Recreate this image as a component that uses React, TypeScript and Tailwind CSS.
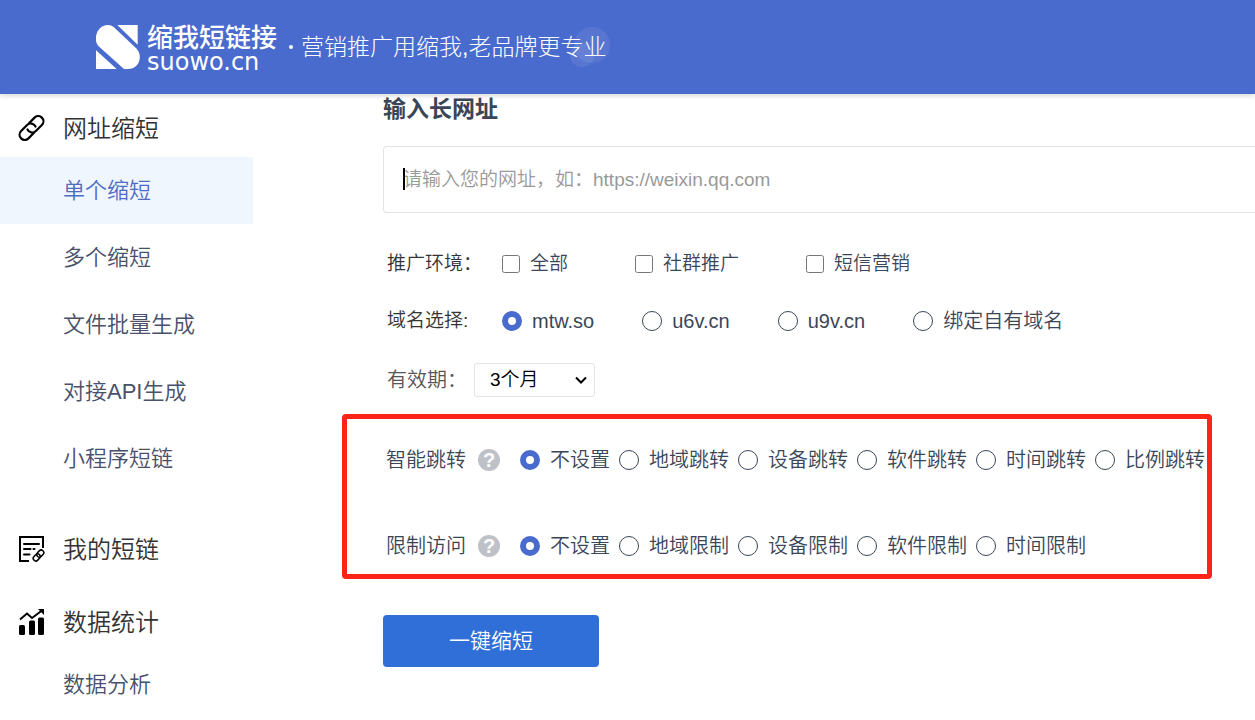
import React, { useState } from 'react';

interface NavGroup {
  title: string;
  icon: React.ReactNode;
  items: string[];
}

const LinkIcon = () => (
  <svg viewBox="0 0 28 28" className="size-7" fill="none" stroke="#000" strokeWidth="2.2" strokeLinecap="round">
    <g transform="translate(14.5 13) rotate(-45)">
      <path d="M2 -5.2H9.5A5.2 5.2 0 0 1 9.5 5.2H1A5.2 5.2 0 0 1 -3.9 -1.8" />
      <path d="M-2 5.2H-9.5A5.2 5.2 0 0 1 -9.5 -5.2H-1A5.2 5.2 0 0 1 3.9 1.8" />
    </g>
  </svg>
);

const NoteIcon = () => (
  <svg viewBox="0 1 28 28" className="size-7" fill="none" stroke="#000" strokeWidth="2" strokeLinecap="round">
    <path d="M12 26H3V2H26V13" strokeLinecap="butt" />
    <path d="M7 9H22M7 14H13.5M16.5 14H17.5M7 19.5H12.5" />
    <g transform="translate(21.5 20.5) rotate(-47)" strokeWidth="1.5">
      <rect x="-6.5" y="-2.6" width="7.8" height="5.2" rx="2.6" />
      <rect x="-1.3" y="-2.6" width="7.8" height="5.2" rx="2.6" />
    </g>
  </svg>
);

const ChartIcon = () => (
  <svg viewBox="0 0 28 28" className="size-7">
    <rect x="2" y="16" width="6" height="10" rx="1.5" />
    <rect x="12" y="11.5" width="6" height="14.5" rx="1.5" />
    <rect x="21" y="8.5" width="6" height="17.5" rx="1.5" />
    <path d="M3 10.5L10 4.5L15 9L25 1.5" fill="none" stroke="#000" strokeWidth="2" />
    <path d="M21 0H27V6Z" />
  </svg>
);

const Logo = () => (
  <svg viewBox="0 0 132 132" className="size-[44px]" fill="#fff">
    <path d="M64 0H125V59Z" />
    <path d="M0 76V132H62Z" />
    <path d="M53 6L122 71C141 92 131 132 96 132H84L7 63C-10 42 3 0 36 0Q46 0 53 6Z" />
  </svg>
);

const NAV: NavGroup[] = [
  {
    title: '网址缩短',
    icon: <LinkIcon />,
    items: ['单个缩短', '多个缩短', '文件批量生成', '对接API生成', '小程序短链'],
  },
  { title: '我的短链', icon: <NoteIcon />, items: [] },
  { title: '数据统计', icon: <ChartIcon />, items: ['数据分析'] },
];

const ENVIRONMENTS = ['全部', '社群推广', '短信营销'];
const DOMAINS = ['mtw.so', 'u6v.cn', 'u9v.cn', '绑定自有域名'];
const JUMPS = ['不设置', '地域跳转', '设备跳转', '软件跳转', '时间跳转', '比例跳转'];
const LIMITS = ['不设置', '地域限制', '设备限制', '软件限制', '时间限制'];

const Header = () => (
  <header className="relative z-10 flex h-[94px] items-center bg-[#4a6bce] pl-24 text-white shadow-[0_1px_6px_rgba(0,0,0,0.2)]">
    <a href="#" className="flex items-center gap-[7px]">
      <Logo />
      <span className="flex flex-col pt-1">
        <span className="text-[26px] leading-[26px] font-medium whitespace-nowrap">缩我短链接</span>
        <span className="font-['DejaVu_Sans'] text-[24px] leading-[22px] font-normal">suowo.cn</span>
      </span>
    </a>
    <span className="ml-3 size-1 shrink-0 rounded-full bg-white" />
    <p className="relative ml-2 text-[23px] leading-8 font-light whitespace-nowrap">
      <span className="absolute -top-1 -right-1 size-9 rounded-full bg-white/8" />
      <span className="absolute top-3 right-3 size-6 rounded-full bg-white/8" />
      营销推广用缩我,老品牌更专业
    </p>
  </header>
);

const Sidebar = () => {
  const [active, setActive] = useState('单个缩短');

  return (
    <nav className="flex w-[253px] shrink-0 flex-col gap-4 pt-[6px]">
      {NAV.map(group => (
        <div key={group.title} className="first:pb-[13px]">
          <h2 className="flex h-[57px] items-center gap-[18px] pl-[17px] text-[24px] text-[#333]">
            {group.icon}
            {group.title}
          </h2>
          {group.items.map(item => (
            <a
              key={item}
              href="#"
              onClick={() => setActive(item)}
              className={`flex h-[67px] items-center pl-[63px] text-[22px] ${
                item === active ? 'bg-[#eff6fd] text-[#4f6cc4]' : 'text-[#48506a]'
              }`}
            >
              {item}
            </a>
          ))}
        </div>
      ))}
    </nav>
  );
};

interface RadioGroupProps {
  name: string;
  options: string[];
  className: string;
}

const RadioGroup = ({ name, options, className }: RadioGroupProps) => {
  const [value, setValue] = useState(options[0]);

  return (
    <div role="radiogroup" className={`flex items-center ${className}`}>
      {options.map(option => (
        <label key={option} className="flex items-center gap-[10px] text-[20px] whitespace-nowrap">
          <input
            type="radio"
            name={name}
            value={option}
            checked={value === option}
            onChange={() => setValue(option)}
            className="size-5 shrink-0 appearance-none rounded-full border border-[#3a4657] bg-white checked:border-[6px] checked:border-[#4a6bce]"
          />
          {option}
        </label>
      ))}
    </div>
  );
};

const SettingRow = ({ title, name, options }: { title: string; name: string; options: string[] }) => (
  <div className="flex h-[30px] items-center text-[20px] whitespace-nowrap">
    <span>{title}</span>
    <button
      type="button"
      aria-label={`${title}说明`}
      className="mr-5 ml-3 flex size-[22px] shrink-0 items-center justify-center rounded-full bg-[#bfc1c8] font-['Liberation_Sans'] text-[20px] leading-none font-bold text-white"
    >
      ?
    </button>
    <RadioGroup name={name} options={options} className="gap-[9px]" />
  </div>
);

const App: React.FC = () => {
  const [url, setUrl] = useState('');

  return (
    <div className="min-h-screen overflow-x-hidden bg-white font-['Liberation_Sans','Noto_Sans_CJK_SC',sans-serif] font-[350]">
      <Header />
      <div className="flex">
        <Sidebar />
        <main className="min-w-0 flex-1 pl-[89px] text-[#3a4657]">
          <form onSubmit={e => e.preventDefault()}>
            <div className="pl-[41px]">
              <h1 className="text-[23px] leading-[30px] font-bold">
                <label htmlFor="long-url">输入长网址</label>
              </h1>
              <div className="relative mt-[22px]">
                <input
                  id="long-url"
                  type="text"
                  value={url}
                  onChange={e => setUrl(e.target.value)}
                  placeholder="请输入您的网址，如：https://weixin.qq.com"
                  className="h-[67px] w-full rounded-l-[4px] border border-r-0 border-[#e3e3e6] pl-[19px] text-[19px] outline-none placeholder:text-[#999]"
                />
                <span className="absolute top-[22px] left-5 h-[22px] w-[2px] bg-black" />
              </div>

              <div className="mt-9 flex h-[30px] items-center pl-1 text-[19px] whitespace-nowrap">
                <span className="w-[115px] shrink-0 text-[#333]">推广环境：</span>
                <div className="flex items-center gap-[67px]">
                  {ENVIRONMENTS.map(env => (
                    <label key={env} className="flex items-center gap-[10px]">
                      <input type="checkbox" name="environment" value={env} className="size-[18px]" />
                      {env}
                    </label>
                  ))}
                </div>
              </div>

              <div className="mt-[27px] flex h-[30px] items-center pl-1 text-[19px] whitespace-nowrap">
                <span className="w-[115px] shrink-0 text-[#333]">域名选择:</span>
                <RadioGroup name="domain" options={DOMAINS} className="gap-12" />
              </div>

              <div className="mt-[27px] flex items-center pl-1">
                <label htmlFor="validity" className="mr-[7px] text-[20px] text-[#555]">有效期：</label>
                <div className="relative">
                  <select
                    id="validity"
                    className="h-[34px] w-[121px] appearance-none rounded-[3px] border border-[#e3e3e6] bg-white pl-[15px] text-[19px] leading-[30px] text-black"
                  >
                    <option>3个月</option>
                    <option>6个月</option>
                    <option>1年</option>
                  </select>
                  <svg viewBox="0 0 12 8" className="pointer-events-none absolute top-[13px] right-2 h-2 w-3" fill="none" stroke="#000" strokeWidth="2">
                    <path d="M1 1.5L6 6.5L11 1.5" />
                  </svg>
                </div>
              </div>
            </div>

            <section className="mt-[17px] flex w-fit flex-col gap-14 rounded-[4px] border-5 border-[#fc2317] pt-[26px] pr-[2px] pb-[13px] pl-[39px]">
              <SettingRow title="智能跳转" name="jump" options={JUMPS} />
              <SettingRow title="限制访问" name="limit" options={LIMITS} />
            </section>

            <button
              type="submit"
              className="mt-9 ml-[41px] h-[52px] w-[216px] rounded-[4px] bg-[#316fd8] text-[21px] text-white"
            >
              一键缩短
            </button>
          </form>
        </main>
      </div>
    </div>
  );
};

export default App;
